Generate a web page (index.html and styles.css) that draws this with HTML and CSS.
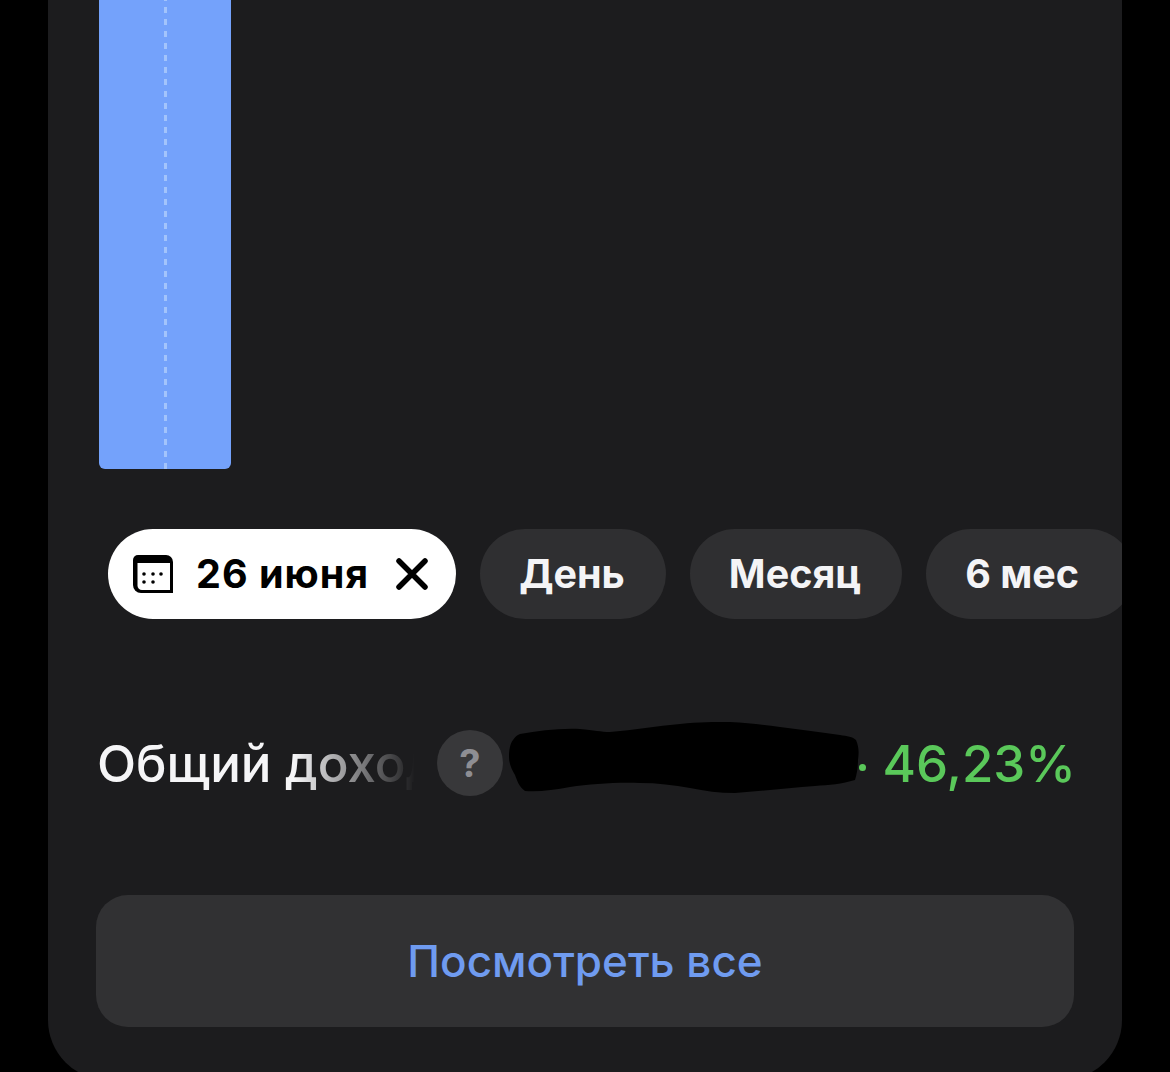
FILE: index.html
```html
<!DOCTYPE html>
<html lang="ru">
<head>
<meta charset="utf-8">
<title>Общий доход</title>
<link rel="stylesheet" href="styles.css">
</head>
<body>
<main class="card">
  <div class="chart"><div class="bar"></div></div>
  <div class="chips">
    <button class="chip chip-active">
      <svg class="cal" viewBox="0 0 40 38" width="40" height="38" aria-hidden="true">
        <path fill="#000" d="M5 0H33a7 7 0 0 1 7 7V38H8a8 8 0 0 1-8-8V5a5 5 0 0 1 5-5Z"/>
        <path fill="#fff" d="M4.500 8H37V35H9a4.500 4.500 0 0 1-4.500-4.500Z"/>
        <g fill="#000">
          <circle cx="11" cy="19" r="1.800"/><circle cx="20" cy="19" r="1.800"/><circle cx="28" cy="19" r="1.800"/>
          <circle cx="11" cy="27" r="1.800"/><circle cx="20" cy="27" r="1.800"/>
        </g>
      </svg>
      <span class="chip-date">26 июня</span>
      <svg class="close" viewBox="0 0 32 32" width="32" height="32" aria-hidden="true">
        <path d="M3 3 29 29M29 3 3 29" stroke="#000" stroke-width="5.500" stroke-linecap="round" fill="none"/>
      </svg>
    </button>
    <button class="chip">День</button>
    <button class="chip">Месяц</button>
    <button class="chip chip-last">6 мес</button>
  </div>
  <div class="income">
    <span class="income-label">Общий доход</span>
    <span class="help">?</span>
    <svg class="blot" viewBox="0 0 350 72" width="350" height="72" aria-hidden="true">
      <path fill="#000" d="M11 12C30 9 50 6 71 7 85 8 92 10 101 10 125 8 148 4 171 2 190 0 205 0 221 0 240 1 255 3 271 5 292 8 312 10 331 13 338 14 344 15 347 18 350 25 350 31 349 38 349 45 348 52 346 58 333 62 320 63 306 64 280 66 252 69 226 71 210 71 196 69 181 66 165 63 148 61 131 61 108 60 82 62 61 65 45 68 30 70 16 69 10 65 8 58 6 53 2 46 0 41 0 35 0 28 1 22 4 18 6 15 8 13 11 12Z"/>
    </svg>
    <span class="dot"></span>
    <span class="percent">46,23%</span>
  </div>
  <button class="view-all">Посмотреть все</button>
</main>
</body>
</html>
```
FILE: styles.css
```css
* { box-sizing: border-box; }
html, body { margin: 0; height: 1072px; overflow: hidden; background: #000; }
body { font-family: Inter, "Noto Sans", "Liberation Sans", sans-serif; }
.card {
  margin: 0 48px;
  height: 1080px;
  background: #1c1c1e;
  border-radius: 0 0 60px 60px;
  overflow: hidden;
}
.chart { height: 469px; padding-left: 51px; }
.bar {
  width: 132px;
  height: 100%;
  border-radius: 0 0 6px 6px;
  background-color: #74a2fb;
  background-image: repeating-linear-gradient(to bottom, #a3c4fc 0 1px, transparent 1px 7px, #a3c4fc 7px 12px);
  background-size: 3px 100%;
  background-position: 65px 0;
  background-repeat: no-repeat;
}
.chips { display: flex; gap: 24px; margin-top: 60px; padding-left: 60px; }
.chip {
  flex: none;
  height: 90px;
  padding: 0 41px 0 39px;
  border: 0;
  border-radius: 45px;
  background: #2f2f31;
  color: #f4f4f6;
  font: 700 39.5px Inter, "Noto Sans", sans-serif;
  display: flex;
  align-items: center;
}
.chip-active {
  background: #fff;
  color: #000;
  padding: 0 28px 0 25px;
}
.chip-date { letter-spacing: 1px; }
.cal { margin-right: 23px; flex: none; }
.close { margin-left: 27px; flex: none; }
.chip-last { width: 208px; padding: 0 53px 0 39px; }
.income { display: flex; align-items: center; margin-top: 111px; padding: 0 46px 0 49px; height: 66px; }
.income-label {
  width: 318px;
  flex: none;
  color: #f5f5f7;
  font-size: 51px;
  font-weight: 500;
  white-space: nowrap;
  overflow: hidden;
  -webkit-mask-image: linear-gradient(to right, #000 62%, transparent 100%);
  mask-image: linear-gradient(to right, #000 62%, transparent 100%);
}
.help {
  flex: none;
  width: 66px;
  height: 66px;
  margin-left: 22px;
  border-radius: 50%;
  background: #38383a;
  color: #8e8e93;
  font-size: 38px;
  font-weight: 700;
  display: flex;
  align-items: center;
  justify-content: center;
}
.blot { flex: none; margin: 0 0 10px 6px; }
.dot { flex: none; width: 7px; height: 7px; margin-top: 8px; border-radius: 50%; background: #5ac85a; }
.percent { margin-left: auto; color: #5ac85a; font-size: 51px; font-weight: 500; }
.view-all {
  display: block;
  width: 978px;
  height: 132px;
  margin: 99px 0 0 48px;
  border: 0;
  border-radius: 32px;
  background: #313133;
  color: #6f9bf0;
  font: 500 44px Inter, "Noto Sans", sans-serif;
}
```
